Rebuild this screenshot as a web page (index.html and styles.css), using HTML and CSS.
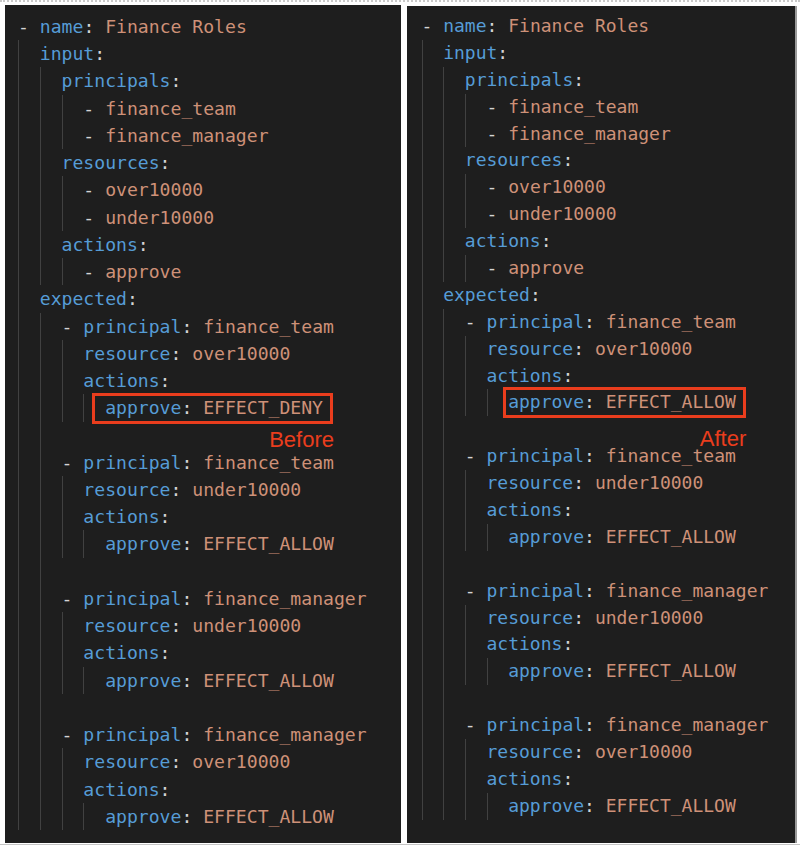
FILE: index.html
```html
<!DOCTYPE html>
<html>
<head>
<meta charset="utf-8">
<title>Finance Roles – Before / After</title>
<link rel="stylesheet" href="styles.css">
</head>
<body>
<div class="page">
  <section class="panel panel-before">
    <div class="ln"><span class="p">- </span><span class="k">name</span><span class="p">: </span><span class="v">Finance Roles</span></div>
    <div class="ln"><i class="g"></i><span class="k">input</span><span class="p">:</span></div>
    <div class="ln"><i class="g"></i><i class="g"></i><span class="k">principals</span><span class="p">:</span></div>
    <div class="ln"><i class="g"></i><i class="g"></i><i class="g"></i><span class="p">- </span><span class="v">finance_team</span></div>
    <div class="ln"><i class="g"></i><i class="g"></i><i class="g"></i><span class="p">- </span><span class="v">finance_manager</span></div>
    <div class="ln"><i class="g"></i><i class="g"></i><span class="k">resources</span><span class="p">:</span></div>
    <div class="ln"><i class="g"></i><i class="g"></i><i class="g"></i><span class="p">- </span><span class="v">over10000</span></div>
    <div class="ln"><i class="g"></i><i class="g"></i><i class="g"></i><span class="p">- </span><span class="v">under10000</span></div>
    <div class="ln"><i class="g"></i><i class="g"></i><span class="k">actions</span><span class="p">:</span></div>
    <div class="ln"><i class="g"></i><i class="g"></i><i class="g"></i><span class="p">- </span><span class="v">approve</span></div>
    <div class="ln"><i class="g"></i><span class="k">expected</span><span class="p">:</span></div>
    <div class="ln"><i class="g"></i><i class="g"></i><span class="p">- </span><span class="k">principal</span><span class="p">: </span><span class="v">finance_team</span></div>
    <div class="ln"><i class="g"></i><i class="g"></i><i class="g"></i><span class="k">resource</span><span class="p">: </span><span class="v">over10000</span></div>
    <div class="ln"><i class="g"></i><i class="g"></i><i class="g"></i><span class="k">actions</span><span class="p">:</span></div>
    <div class="ln"><i class="g"></i><i class="g"></i><i class="g"></i><i class="g"></i><span class="hl"><span class="k">approve</span><span class="p">: </span><span class="v">EFFECT_DENY</span><span class="tag">Before</span></span></div>
    <div class="ln"><i class="g"></i><i class="g"></i></div>
    <div class="ln"><i class="g"></i><i class="g"></i><span class="p">- </span><span class="k">principal</span><span class="p">: </span><span class="v">finance_team</span></div>
    <div class="ln"><i class="g"></i><i class="g"></i><i class="g"></i><span class="k">resource</span><span class="p">: </span><span class="v">under10000</span></div>
    <div class="ln"><i class="g"></i><i class="g"></i><i class="g"></i><span class="k">actions</span><span class="p">:</span></div>
    <div class="ln"><i class="g"></i><i class="g"></i><i class="g"></i><i class="g"></i><span class="k">approve</span><span class="p">: </span><span class="v">EFFECT_ALLOW</span></div>
    <div class="ln"><i class="g"></i><i class="g"></i></div>
    <div class="ln"><i class="g"></i><i class="g"></i><span class="p">- </span><span class="k">principal</span><span class="p">: </span><span class="v">finance_manager</span></div>
    <div class="ln"><i class="g"></i><i class="g"></i><i class="g"></i><span class="k">resource</span><span class="p">: </span><span class="v">under10000</span></div>
    <div class="ln"><i class="g"></i><i class="g"></i><i class="g"></i><span class="k">actions</span><span class="p">:</span></div>
    <div class="ln"><i class="g"></i><i class="g"></i><i class="g"></i><i class="g"></i><span class="k">approve</span><span class="p">: </span><span class="v">EFFECT_ALLOW</span></div>
    <div class="ln"><i class="g"></i><i class="g"></i></div>
    <div class="ln"><i class="g"></i><i class="g"></i><span class="p">- </span><span class="k">principal</span><span class="p">: </span><span class="v">finance_manager</span></div>
    <div class="ln"><i class="g"></i><i class="g"></i><i class="g"></i><span class="k">resource</span><span class="p">: </span><span class="v">over10000</span></div>
    <div class="ln"><i class="g"></i><i class="g"></i><i class="g"></i><span class="k">actions</span><span class="p">:</span></div>
    <div class="ln"><i class="g"></i><i class="g"></i><i class="g"></i><i class="g"></i><span class="k">approve</span><span class="p">: </span><span class="v">EFFECT_ALLOW</span></div>
  </section>

  <section class="panel panel-after">
    <div class="ln"><span class="p">- </span><span class="k">name</span><span class="p">: </span><span class="v">Finance Roles</span></div>
    <div class="ln"><i class="g"></i><span class="k">input</span><span class="p">:</span></div>
    <div class="ln"><i class="g"></i><i class="g"></i><span class="k">principals</span><span class="p">:</span></div>
    <div class="ln"><i class="g"></i><i class="g"></i><i class="g"></i><span class="p">- </span><span class="v">finance_team</span></div>
    <div class="ln"><i class="g"></i><i class="g"></i><i class="g"></i><span class="p">- </span><span class="v">finance_manager</span></div>
    <div class="ln"><i class="g"></i><i class="g"></i><span class="k">resources</span><span class="p">:</span></div>
    <div class="ln"><i class="g"></i><i class="g"></i><i class="g"></i><span class="p">- </span><span class="v">over10000</span></div>
    <div class="ln"><i class="g"></i><i class="g"></i><i class="g"></i><span class="p">- </span><span class="v">under10000</span></div>
    <div class="ln"><i class="g"></i><i class="g"></i><span class="k">actions</span><span class="p">:</span></div>
    <div class="ln"><i class="g"></i><i class="g"></i><i class="g"></i><span class="p">- </span><span class="v">approve</span></div>
    <div class="ln"><i class="g"></i><span class="k">expected</span><span class="p">:</span></div>
    <div class="ln"><i class="g"></i><i class="g"></i><span class="p">- </span><span class="k">principal</span><span class="p">: </span><span class="v">finance_team</span></div>
    <div class="ln"><i class="g"></i><i class="g"></i><i class="g"></i><span class="k">resource</span><span class="p">: </span><span class="v">over10000</span></div>
    <div class="ln"><i class="g"></i><i class="g"></i><i class="g"></i><span class="k">actions</span><span class="p">:</span></div>
    <div class="ln"><i class="g"></i><i class="g"></i><i class="g"></i><i class="g"></i><span class="hl"><span class="k">approve</span><span class="p">: </span><span class="v">EFFECT_ALLOW</span><span class="tag">After</span></span></div>
    <div class="ln"><i class="g"></i><i class="g"></i></div>
    <div class="ln"><i class="g"></i><i class="g"></i><span class="p">- </span><span class="k">principal</span><span class="p">: </span><span class="v">finance_team</span></div>
    <div class="ln"><i class="g"></i><i class="g"></i><i class="g"></i><span class="k">resource</span><span class="p">: </span><span class="v">under10000</span></div>
    <div class="ln"><i class="g"></i><i class="g"></i><i class="g"></i><span class="k">actions</span><span class="p">:</span></div>
    <div class="ln"><i class="g"></i><i class="g"></i><i class="g"></i><i class="g"></i><span class="k">approve</span><span class="p">: </span><span class="v">EFFECT_ALLOW</span></div>
    <div class="ln"><i class="g"></i><i class="g"></i></div>
    <div class="ln"><i class="g"></i><i class="g"></i><span class="p">- </span><span class="k">principal</span><span class="p">: </span><span class="v">finance_manager</span></div>
    <div class="ln"><i class="g"></i><i class="g"></i><i class="g"></i><span class="k">resource</span><span class="p">: </span><span class="v">under10000</span></div>
    <div class="ln"><i class="g"></i><i class="g"></i><i class="g"></i><span class="k">actions</span><span class="p">:</span></div>
    <div class="ln"><i class="g"></i><i class="g"></i><i class="g"></i><i class="g"></i><span class="k">approve</span><span class="p">: </span><span class="v">EFFECT_ALLOW</span></div>
    <div class="ln"><i class="g"></i><i class="g"></i></div>
    <div class="ln"><i class="g"></i><i class="g"></i><span class="p">- </span><span class="k">principal</span><span class="p">: </span><span class="v">finance_manager</span></div>
    <div class="ln"><i class="g"></i><i class="g"></i><i class="g"></i><span class="k">resource</span><span class="p">: </span><span class="v">over10000</span></div>
    <div class="ln"><i class="g"></i><i class="g"></i><i class="g"></i><span class="k">actions</span><span class="p">:</span></div>
    <div class="ln"><i class="g"></i><i class="g"></i><i class="g"></i><i class="g"></i><span class="k">approve</span><span class="p">: </span><span class="v">EFFECT_ALLOW</span></div>
  </section>
</div>
</body>
</html>
```

FILE: styles.css
```css
html, body {
  margin: 0;
  padding: 0;
  background: #ffffff;
}

.page {
  display: flex;
  align-items: flex-start;
  gap: 6px;
  padding: 3px 0 1px 5px;
  border-top: 2px dotted #c9c9c9;
  border-bottom: 1px solid #c4c4c4;
}

.panel {
  box-sizing: border-box;
  background: #1e1e1e;
  font-family: "DejaVu Sans Mono", "Liberation Mono", monospace;
  color: #d4d4d4;
}

.panel-before {
  width: 396px;
  height: 838px;
  padding: 8px 0 0 13px;
  font-size: 18.1px;
  line-height: 27.24px;
}

.panel-after {
  width: 390px;
  height: 837px;
  margin-top: 1px;
  padding: 7px 0 0 14.5px;
  font-size: 18px;
  line-height: 26.9px;
  border-right: 2px solid #9a9a9a;
}

.ln {
  white-space: pre;
}

.panel-before .ln { height: 27.24px; }
.panel-after .ln { height: 26.9px; }

.g {
  display: inline-block;
  box-sizing: border-box;
  width: 2ch;
  vertical-align: top;
  border-left: 1px solid #414141;
}

.panel-before .g { height: 27.24px; }
.panel-after .g { height: 26.9px; }

.k { color: #569cd6; }
.v { color: #ce9178; }
.p { color: #d4d4d4; }

.hl {
  position: relative;
  display: inline-block;
}

.hl::before {
  content: "";
  position: absolute;
  border: 3px solid #ea3d1d;
  pointer-events: none;
}

.panel-before .hl::before {
  top: -1.5px;
  bottom: -2.5px;
  left: -13px;
  right: -10px;
}

.panel-after .hl::before {
  top: -2px;
  bottom: -2px;
  left: -5px;
  right: -10px;
}

.tag {
  position: absolute;
  font-family: "Liberation Sans", Arial, sans-serif;
  font-size: 22px;
  line-height: 12px;
  color: #ea3d1d;
  white-space: nowrap;
}

.panel-before .tag {
  top: calc(100% + 12.5px);
  right: -11px;
}

.panel-after .tag {
  top: calc(100% + 17px);
  right: -10.5px;
}
```
